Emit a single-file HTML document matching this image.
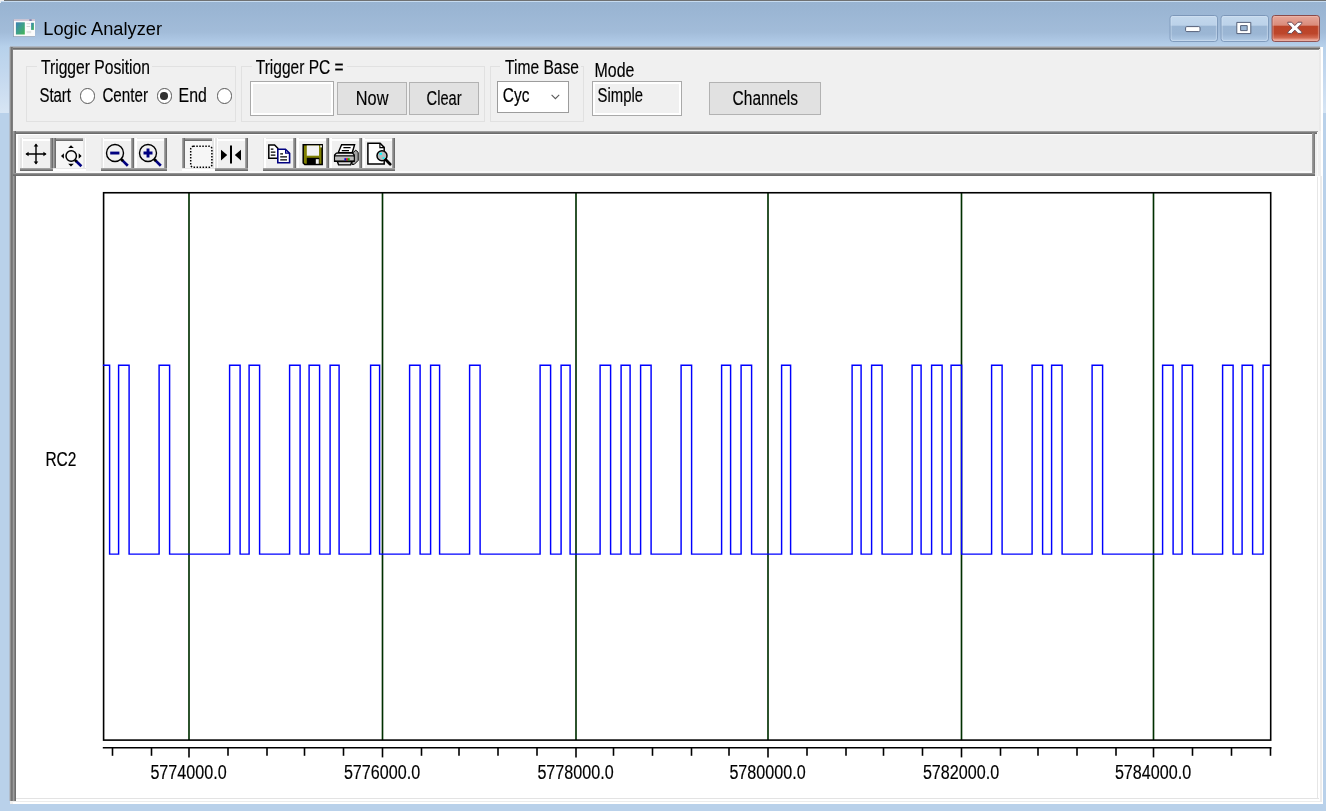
<!DOCTYPE html>
<html>
<head>
<meta charset="utf-8">
<title>Logic Analyzer</title>
<style>
html,body{margin:0;padding:0;}
body{width:1326px;height:811px;overflow:hidden;position:relative;
  font-family:"Liberation Sans",sans-serif;
  background:#b9d1ea;}
div{position:absolute;box-sizing:border-box;}
svg{position:absolute;left:0;top:0;will-change:transform;}
svg text{font-family:"Liberation Sans",sans-serif;}
/* window frame gradient (title + side borders) */
#framegrad{left:0;top:0;width:1326px;height:112.5px;
  background:linear-gradient(to bottom,#98b3d1 0px,#9bb6d4 12px,#a2bcd9 32px,#aac4e1 38px,#b7d1eb 47px,#c5d9ef 78px,#d7e5f4 112.5px);}
#topline0{left:0;top:0;width:1326px;height:1px;background:#6f7173;}
#topline1{left:0;top:1px;width:1326px;height:1.3px;background:#c6dbf0;}
/* client */
#client{left:10px;top:46.5px;width:1313px;height:757.5px;background:#f0f0f0;}
#cl-top{left:10px;top:46px;width:1310px;height:5px;background:linear-gradient(to bottom,#adb8c6 0,#adb8c6 20%,#9b9b9b 20%,#9b9b9b 40%,#6d6d6d 40%,#6d6d6d 60%,#8c8c8c 60%,#8c8c8c 80%,#f6f6f6 80%,#f6f6f6 100%);}
#cl-left{left:9px;top:47px;width:4px;height:754px;background:linear-gradient(to right,#b0bccb 0,#b0bccb 25%,#949494 25%,#949494 50%,#747474 50%,#747474 75%,#7e7e7e 75%,#7e7e7e 100%);}
#cl-right2{left:1319px;top:49px;width:2px;height:82px;background:linear-gradient(to right,#ececec 0,#e6e6e6 60%,#f4f4f4 100%);}
#cl-right{left:1310.5px;top:0.5px;width:2.5px;height:757px;background:#fff;}
/* plot area */
#plot{left:3px;top:129px;width:1310px;height:628.5px;background:#fff;}
#plot-left{left:0;top:0;width:3px;height:625px;background:linear-gradient(to right,#a0a0a0 0,#9a9a9a 45%,#6e6e6e 55%,#6e6e6e 100%);}
.hl{background:#e6e6e6;}
/* toolbar */
#tb{left:3px;top:84px;width:1302px;height:45px;background:#f0f0f0;
  border:3px solid #7c7c7c;border-image:none;}
#tb-t{left:0;top:0;width:1305px;height:3px;background:linear-gradient(to bottom,#a8a8a8 0,#8f8f8f 45%,#6c6c6c 55%,#6c6c6c 100%);}
#tb-l{left:0;top:0;width:3px;height:45px;background:linear-gradient(to right,#a0a0a0 0,#9a9a9a 45%,#6e6e6e 55%,#6e6e6e 100%);}
#tb-r{left:1299px;top:2px;width:3px;height:43px;background:linear-gradient(to right,#a0a0a0 0,#8c8c8c 50%,#727272 100%);}
#tb-b{left:0;top:42px;width:1302px;height:3px;background:linear-gradient(to bottom,#9c9c9c 0,#868686 45%,#6c6c6c 55%,#6c6c6c 100%);}
#tb-hi-t{left:3px;top:3px;width:1296px;height:1.5px;background:#fff;}
#tb-hi-l{left:3px;top:3px;width:1.5px;height:39px;background:#fff;}
#tb-hi-b{left:3px;top:40px;width:1296px;height:2px;background:#f9f9f9;}
/* toolbar buttons */
.tbb{top:7.4px;height:33px;width:33px;background:#f0f0f0;}
.tbb i{position:absolute;display:block;}
.tbb.up .a{left:0;top:0;right:0;height:3px;background:linear-gradient(to bottom,#e6e6e6 0,#e6e6e6 50%,#fff 50%,#fff 100%);}
.tbb.up .b{left:0;top:0;bottom:0;width:3px;background:linear-gradient(to right,#e6e6e6 0,#e6e6e6 50%,#fff 50%,#fff 100%);}
.tbb.up .c{right:0;top:0;bottom:0;width:3px;background:linear-gradient(to right,#a3a3a3 0,#a0a0a0 45%,#707070 55%,#6b6b6b 100%);}
.tbb.up .d{left:0;right:0;bottom:0;height:3px;background:linear-gradient(to bottom,#a3a3a3 0,#a0a0a0 45%,#707070 55%,#6b6b6b 100%);}
.tbb.dn{background:#f6f6f6;}
.tbb.dn .a{left:0;top:0;right:0;height:3px;background:linear-gradient(to bottom,#a3a3a3 0,#a0a0a0 45%,#707070 55%,#6b6b6b 100%);}
.tbb.dn .b{left:0;top:0;bottom:0;width:3px;background:linear-gradient(to right,#a3a3a3 0,#a0a0a0 45%,#707070 55%,#6b6b6b 100%);}
.tbb.dn .c{right:0;top:0;bottom:0;width:3px;background:linear-gradient(to right,#e6e6e6 0,#e6e6e6 50%,#fff 50%,#fff 100%);}
.tbb.dn .d{left:0;right:0;bottom:0;height:3px;background:linear-gradient(to bottom,#e6e6e6 0,#e6e6e6 50%,#fff 50%,#fff 100%);}
/* group boxes */
.gb{border:1px solid #e1e1e1;}
.gbl{background:#f0f0f0;height:4px;}
/* edit / buttons */
.edit{border:1px solid #a9a9a9;background:#f0f0f0;}
.edit:before{content:"";position:absolute;left:0;top:0;right:0;bottom:0;border:2px solid #fff;}
.btn{background:#e1e1e1;border:1px solid #b2b2b2;}
.combo{background:#fff;border:1px solid #9c9c9c;}
.radio{width:15.4px;height:15.4px;border-radius:50%;border:1.1px solid #595959;background:#fff;}
.radio.on:after{content:"";position:absolute;left:2.9px;top:2.9px;width:7.4px;height:7.4px;border-radius:50%;background:#333;}
/* caption buttons */
.cap{top:15.5px;width:48px;height:26px;border-radius:3.5px;border:1px solid #6683a6;
  background:linear-gradient(to bottom,#c1d6ec 0,#bcd2e9 38%,#9bb6d4 40%,#9ab4d3 70%,#b3cde8 100%);
  box-shadow:inset 0 0 0 1px rgba(214,229,245,.75);}
#close{border-color:#7b3a35;
  background:linear-gradient(to bottom,#e0a193 0,#d98a79 38%,#bc4429 40%,#bd462b 70%,#d4674f 92%,#e59c8c 100%);
  box-shadow:inset 0 0 0 1px rgba(240,180,165,.55);}
</style>
</head>
<body>
<div id="framegrad"></div>
<div id="topline0"></div>
<div id="topline1"></div>
<div style="left:0;top:0;width:4px;height:1px;background:#f2f2f2"></div>
<div style="left:0;top:1px;width:1px;height:2px;background:#e6ecf3"></div>

<!-- caption buttons -->

<div id="client">
  <div id="cl-right"></div>
  <!-- group boxes (coords relative to client: x-10, y-46.5) -->
  <div class="gb" style="left:16px;top:19.5px;width:210px;height:56px"></div>
  <div class="gbl" style="left:27px;top:18px;width:115px"></div>
  <div class="gb" style="left:231px;top:19.5px;width:243.5px;height:56px"></div>
  <div class="gbl" style="left:242px;top:18px;width:95px"></div>
  <div class="gb" style="left:480px;top:19.5px;width:93.7px;height:56px"></div>
  <div class="gbl" style="left:490.4px;top:18px;width:81px"></div>

  <div class="radio" style="left:70px;top:41.8px"></div>
  <div class="radio on" style="left:146.6px;top:41.8px"></div>
  <div class="radio" style="left:206.6px;top:41.8px"></div>

  <div class="edit" style="left:240px;top:34.4px;width:84px;height:35px"></div>
  <div class="btn" style="left:327.4px;top:35.5px;width:69.6px;height:33.2px"></div>
  <div class="btn" style="left:399.4px;top:35.5px;width:69.8px;height:33.2px"></div>
  <div class="combo" style="left:487.4px;top:34.4px;width:71.4px;height:32px"></div>
  <div class="edit" style="left:582px;top:34.4px;width:90.2px;height:35px"></div>
  <div class="btn" style="left:699.4px;top:35.5px;width:111.8px;height:33.2px"></div>

  <!-- toolbar -->
  <div id="tb" style="border:none">
    <div id="tb-hi-t"></div><div id="tb-hi-l"></div><div id="tb-hi-b"></div>
    <div id="tb-t"></div><div id="tb-l"></div><div id="tb-r"></div><div id="tb-b"></div>
    <div class="tbb up" style="left:7.25px"><i class="a"></i><i class="b"></i><i class="c"></i><i class="d"></i></div>
    <div class="tbb dn" style="left:40.25px"><i class="a"></i><i class="b"></i><i class="c"></i><i class="d"></i></div>
    <div class="tbb up" style="left:88.25px"><i class="a"></i><i class="b"></i><i class="c"></i><i class="d"></i></div>
    <div class="tbb up" style="left:121.25px"><i class="a"></i><i class="b"></i><i class="c"></i><i class="d"></i></div>
    <div class="tbb dn" style="left:169.25px"><i class="a"></i><i class="b"></i><i class="c"></i><i class="d"></i></div>
    <div class="tbb up" style="left:202.25px"><i class="a"></i><i class="b"></i><i class="c"></i><i class="d"></i></div>
    <div class="tbb up" style="left:250.25px"><i class="a"></i><i class="b"></i><i class="c"></i><i class="d"></i></div>
    <div class="tbb up" style="left:283.25px"><i class="a"></i><i class="b"></i><i class="c"></i><i class="d"></i></div>
    <div class="tbb up" style="left:316.25px"><i class="a"></i><i class="b"></i><i class="c"></i><i class="d"></i></div>
    <div class="tbb up" style="left:349.25px"><i class="a"></i><i class="b"></i><i class="c"></i><i class="d"></i></div>
  </div>

  <!-- plot -->
  <div id="plot">
    <div id="plot-left"></div>
    <!-- right light lines -->
    <div class="hl" style="left:1304.2px;top:0;width:1.3px;height:622.5px"></div>
    <div style="left:1307.4px;top:0;width:1.2px;height:625.5px;background:#ececec"></div>
    <!-- bottom light lines -->
    <div class="hl" style="left:3px;top:622.5px;width:1302.5px;height:1.3px;background:#e3e3e3"></div>
    <div style="left:0px;top:625.5px;width:1308.6px;height:1.3px;background:#ececec"></div>
  </div>
  <div style="left:1307.2px;top:85px;width:1.3px;height:45px;background:#f9f9f9"></div>
</div>
<div id="cl-top"></div>
<div id="cl-left"></div>
<div id="cl-right2"></div>

<svg width="1326" height="811" viewBox="0 0 1326 811">
  <!-- title icon -->
  <g>
    <rect x="13.2" y="19.6" width="21.8" height="17.3" fill="#8192a9"/>
    <rect x="13.8" y="19.5" width="21.2" height="16.8" fill="#fbfbfb"/>
    <rect x="29.4" y="19.5" width="2.2" height="1.2" fill="#6a76a8"/>
    <rect x="13.8" y="19.5" width="21.2" height="1.3" fill="#cbb6ca"/><rect x="29.4" y="19.5" width="2.2" height="1.3" fill="#6a76a8"/>
    <defs><linearGradient id="gi" x1="0" y1="0" x2="1" y2="1"><stop offset="0" stop-color="#3f7fb5"/><stop offset="0.5" stop-color="#3ea08a"/><stop offset="1" stop-color="#45b552"/></linearGradient></defs>
    <rect x="15.9" y="22.3" width="8.9" height="12.2" fill="url(#gi)"/>
    <rect x="31.1" y="22.8" width="2.8" height="7.1" fill="url(#gi)"/>
    <rect x="26.6" y="23.2" width="3.6" height="1" fill="#d4d4d4"/>
    <rect x="26.6" y="26" width="3.6" height="1" fill="#d4d4d4"/>
    <rect x="26.6" y="31" width="4.6" height="2.2" fill="#e4e4e4"/>
  </g>
  <!-- caption buttons -->
  <defs>
    <linearGradient id="capg" x1="0" y1="0" x2="0" y2="1">
      <stop offset="0" stop-color="#c3d8ed"/><stop offset="0.38" stop-color="#bcd2e9"/>
      <stop offset="0.4" stop-color="#9ab5d3"/><stop offset="0.72" stop-color="#9bb6d4"/>
      <stop offset="0.93" stop-color="#adc7e3"/><stop offset="1" stop-color="#c4daf0"/>
    </linearGradient>
    <linearGradient id="closeg" x1="0" y1="0" x2="0" y2="1">
      <stop offset="0" stop-color="#f0b9ad"/><stop offset="0.06" stop-color="#e5a396"/><stop offset="0.38" stop-color="#d98b7a"/>
      <stop offset="0.4" stop-color="#bb4328"/><stop offset="0.7" stop-color="#bd462b"/>
      <stop offset="0.86" stop-color="#d26a52"/><stop offset="0.95" stop-color="#eeaa9b"/><stop offset="1" stop-color="#f0b0a2"/>
    </linearGradient>
  </defs>
  <g>
    <rect x="1170.1" y="15.5" width="47.3" height="25.9" rx="2.6" fill="url(#capg)" stroke="#7c97b9" stroke-width="1"/>
    <rect x="1171.1" y="16.5" width="45.3" height="23.9" rx="1.8" fill="none" stroke="#d3e3f4" stroke-opacity="0.6" stroke-width="1"/>
    <rect x="1221.1" y="15.5" width="47.3" height="25.9" rx="2.6" fill="url(#capg)" stroke="#7c97b9" stroke-width="1"/>
    <rect x="1222.1" y="16.5" width="45.3" height="23.9" rx="1.8" fill="none" stroke="#d3e3f4" stroke-opacity="0.6" stroke-width="1"/>
    <rect x="1272.1" y="15.5" width="47.3" height="25.9" rx="2.6" fill="url(#closeg)" stroke="#8a4a4a" stroke-width="1"/>
    <rect x="1273.1" y="16.5" width="45.3" height="23.9" rx="1.8" fill="none" stroke="#f0b9ab" stroke-opacity="0.55" stroke-width="1"/>
  </g>
  <!-- caption glyphs -->
  <g>
    <rect x="1185.6" y="26.6" width="14.4" height="5" rx="1.2" fill="#fff" stroke="#55617a" stroke-width="1"/>
    <path d="M1236.8 22.4h14v11.2h-14z M1240.6 25.6v5h6.6v-5z" fill="#fff" fill-rule="evenodd" stroke="#55617a" stroke-width="1"/>
    <path d="M1287.8 22.2h3.8l3.2 3.3 3.2-3.3h3.8v1.4l-4.3 4.2 4.3 4.2v1.4h-3.8l-3.2-3.3-3.2 3.3h-3.8v-1.4l4.3-4.2-4.3-4.2z" fill="#fff" stroke="#6b4a55" stroke-width="1"/>
  </g>

  <!-- plot -->
  <g fill="none" stroke="#003000" stroke-width="1.65"><line x1="189.0" y1="192.75" x2="189.0" y2="740.1"/><line x1="382.5" y1="192.75" x2="382.5" y2="740.1"/><line x1="576.0" y1="192.75" x2="576.0" y2="740.1"/><line x1="768.0" y1="192.75" x2="768.0" y2="740.1"/><line x1="961.5" y1="192.75" x2="961.5" y2="740.1"/><line x1="1153.5" y1="192.75" x2="1153.5" y2="740.1"/></g>
  <rect x="103.6" y="192.75" width="1167.1" height="547.35" fill="none" stroke="#000" stroke-width="1.6"/>
  <path d="M102.89999999999999 365.2H109.6V554.1H118.6V365.2H129.1V554.1H159.1V365.2H169.6V554.1H229.6V365.2H240.1V554.1H249.1V365.2H259.6V554.1H289.6V365.2H300.1V554.1H309.1V365.2H319.6V554.1H330.1V365.2H339.1V554.1H370.6V365.2H379.6V554.1H409.6V365.2H420.1V554.1H430.6V365.2H439.6V554.1H469.6V365.2H480.1V554.1H540.1V365.2H550.6V554.1H561.1V365.2H570.1V554.1H600.1V365.2H610.6V554.1H621.1V365.2H630.1V554.1H640.6V365.2H651.1V554.1H681.1V365.2H691.6V554.1H721.6V365.2H730.6V554.1H741.1V365.2H751.6V554.1H781.6V365.2H790.6V554.1H852.1V365.2H861.1V554.1H871.6V365.2H882.1V554.1H912.1V365.2H921.1V554.1H931.6V365.2H942.1V554.1H951.1V365.2H961.6V554.1H991.6V365.2H1002.1V554.1H1032.1V365.2H1042.6V554.1H1051.6V365.2H1062.1V554.1H1092.1V365.2H1102.6V554.1H1162.6V365.2H1173.1V554.1H1182.1V365.2H1192.6V554.1H1222.6V365.2H1233.1V554.1H1242.1V365.2H1252.6V554.1H1263.1V365.2H1269.9" fill="none" stroke="#0000ff" stroke-width="1.45" stroke-linejoin="miter"/>
  <g stroke="#000" stroke-width="1.6" fill="none">
    <line x1="102.8" y1="747.7" x2="1271.5" y2="747.7"/>
    <line x1="112.5" y1="747.7" x2="112.5" y2="755.8000000000001"/><line x1="151.5" y1="747.7" x2="151.5" y2="755.8000000000001"/><line x1="189.0" y1="747.7" x2="189.0" y2="757.4000000000001"/><line x1="228.0" y1="747.7" x2="228.0" y2="755.8000000000001"/><line x1="267.0" y1="747.7" x2="267.0" y2="755.8000000000001"/><line x1="304.5" y1="747.7" x2="304.5" y2="755.8000000000001"/><line x1="343.5" y1="747.7" x2="343.5" y2="755.8000000000001"/><line x1="382.5" y1="747.7" x2="382.5" y2="757.4000000000001"/><line x1="421.5" y1="747.7" x2="421.5" y2="755.8000000000001"/><line x1="459.0" y1="747.7" x2="459.0" y2="755.8000000000001"/><line x1="498.0" y1="747.7" x2="498.0" y2="755.8000000000001"/><line x1="537.0" y1="747.7" x2="537.0" y2="755.8000000000001"/><line x1="576.0" y1="747.7" x2="576.0" y2="757.4000000000001"/><line x1="613.5" y1="747.7" x2="613.5" y2="755.8000000000001"/><line x1="652.5" y1="747.7" x2="652.5" y2="755.8000000000001"/><line x1="691.5" y1="747.7" x2="691.5" y2="755.8000000000001"/><line x1="729.0" y1="747.7" x2="729.0" y2="755.8000000000001"/><line x1="768.0" y1="747.7" x2="768.0" y2="757.4000000000001"/><line x1="807.0" y1="747.7" x2="807.0" y2="755.8000000000001"/><line x1="846.0" y1="747.7" x2="846.0" y2="755.8000000000001"/><line x1="883.5" y1="747.7" x2="883.5" y2="755.8000000000001"/><line x1="922.5" y1="747.7" x2="922.5" y2="755.8000000000001"/><line x1="961.5" y1="747.7" x2="961.5" y2="757.4000000000001"/><line x1="1000.5" y1="747.7" x2="1000.5" y2="755.8000000000001"/><line x1="1038.0" y1="747.7" x2="1038.0" y2="755.8000000000001"/><line x1="1077.0" y1="747.7" x2="1077.0" y2="755.8000000000001"/><line x1="1116.0" y1="747.7" x2="1116.0" y2="755.8000000000001"/><line x1="1153.5" y1="747.7" x2="1153.5" y2="757.4000000000001"/><line x1="1192.5" y1="747.7" x2="1192.5" y2="755.8000000000001"/><line x1="1231.5" y1="747.7" x2="1231.5" y2="755.8000000000001"/><line x1="1270.5" y1="747.7" x2="1270.5" y2="755.8000000000001"/>
  </g>

  <!-- toolbar icons -->
  <g id="ic1" fill="#000">
    <path d="M26.4 154H45.6M36 144.4V163.6" fill="none" stroke="#000" stroke-width="1.4"/>
    <path d="M36 143.4l2.3 3.2h-4.6zM36 164.6l2.3-3.2h-4.6zM25.4 154l3.2-2.3v4.6zM46.6 154l-3.2-2.3v4.6z"/>
  </g>
  <g id="ic2">
    <circle cx="71.2" cy="156" r="5.2" fill="none" stroke="#000" stroke-width="1.5"/>
    <path d="M76 161L81.4 166.2" stroke="#000080" stroke-width="2.6" fill="none"/>
    <path d="M75 160L76.6 161.6" stroke="#000" stroke-width="2.6" fill="none"/>
    <path d="M71 145.2l2.8 2.9h-5.6zM71 166.6l2.8-2.9h-5.6zM61 156l2.9-2.8v5.6zM81.6 156l-2.9-2.8v5.6z" fill="#000"/>
  </g>
  <g id="ic3">
    <circle cx="115" cy="153" r="8.5" fill="none" stroke="#000" stroke-width="1.4"/>
    <rect x="110.2" y="151.6" width="9.2" height="2.9" fill="#000080"/>
    <path d="M122.4 160.4L127.8 165.8" stroke="#000080" stroke-width="2.7" fill="none"/>
    <path d="M121 159L123 161" stroke="#000" stroke-width="2.7" fill="none"/>
  </g>
  <g id="ic4">
    <circle cx="148" cy="153" r="8.5" fill="none" stroke="#000" stroke-width="1.4"/>
    <path d="M143.5 151.6h9v2.9h-9zM146.55 148.5h2.9v9h-2.9z" fill="#000080"/>
    <path d="M155.4 160.4L160.8 165.8" stroke="#000080" stroke-width="2.7" fill="none"/>
    <path d="M154 159L156 161" stroke="#000" stroke-width="2.7" fill="none"/>
  </g>
  <g id="ic5">
    <rect x="190.7" y="146.3" width="21.2" height="21" rx="2.6" fill="none" stroke="#000" stroke-width="1.5" stroke-dasharray="1.5 1.5"/>
  </g>
  <g id="ic6" fill="#000">
    <rect x="230" y="145.5" width="2" height="18"/>
    <path d="M221 149.8L227.2 155L221 160.4zM241 149.8L234.8 155L241 160.4z"/>
  </g>
  <g id="ic7">
    <path d="M268.8 145h5.8l3.2 3.2v10h-9z" fill="#fff" stroke="#000" stroke-width="1.5"/>
    <path d="M270.8 149.2h2.6M270.8 152.2h4.6M270.8 155.2h4.6" stroke="#000" stroke-width="1.3"/>
    <path d="M277.8 149.2h7.6l4.2 4.2v9.4h-11.8z" fill="#fff" stroke="#000080" stroke-width="1.6"/>
    <path d="M285.6 149.6v3.6h3.6" fill="none" stroke="#000080" stroke-width="1.2"/>
    <path d="M280.2 153.8h2.8M280.2 156.8h6.8M280.2 159.8h6.8" stroke="#000" stroke-width="1.3"/>
  </g>
  <g id="ic8">
    <path d="M303.2 144.7h19v19.9h-17.4l-1.6-1.6z" fill="#808000" stroke="#000" stroke-width="1.5"/>
    <rect x="306.8" y="145.5" width="12.2" height="10.2" fill="#f2f2f2"/>
    <rect x="306.8" y="157.8" width="12.6" height="6.6" fill="#000"/>
    <rect x="315.8" y="159.2" width="3" height="4.6" fill="#f4f4f4"/>
    <rect x="320.2" y="145.4" width="1.8" height="2" fill="#e8e8e8"/>
  </g>
  <g id="ic9" stroke="#000" stroke-width="1.4" fill="none">
    <path d="M352.4 153.2l3.4-3 2.4 2.2v8l-4 4h-2.2z" fill="#a4a4a4" stroke-width="1"/>
    <path d="M341.6 144.7h13l-2.4 8h-14z" fill="#fff"/>
    <path d="M343.4 147.6h7.2M341.8 150.6h7.2" stroke-width="1.3"/>
    <path d="M336.4 153.1h16.2l1.6 1.8v6.4h-19.6v-6.2z" fill="#e9e9e9"/>
    <rect x="335.4" y="156.6" width="18" height="4" fill="#bdbdbd" stroke="none"/>
    <path d="M334.8 155.9h19.2M334.8 161.2h19.2" stroke-width="1.3"/>
    <path d="M337.4 161.6h14.4l-1.2 3.3h-12z" fill="#dcdcdc"/>
    <rect x="344.4" y="158.2" width="1.8" height="2.2" fill="#0000e0" stroke="none"/>
    <rect x="346.2" y="158.2" width="1.7" height="2.2" fill="#e00000" stroke="none"/>
    <rect x="347.9" y="158.2" width="1.8" height="2.2" fill="#00b000" stroke="none"/>
  </g>
  <g id="ic10">
    <path d="M367.9 143.3h12.2l4.1 4.1v16.7h-16.3z" fill="#fff" stroke="#000" stroke-width="1.5"/>
    <path d="M379.9 143.6v4.1h4.1" fill="none" stroke="#000" stroke-width="1.2"/>
    <circle cx="382" cy="155.8" r="5" fill="#b7bcbe" stroke="#000" stroke-width="1.5"/>
    <rect x="379.4" y="152.8" width="2.6" height="2" fill="#00ffff"/>
    <rect x="382.6" y="157.2" width="1.8" height="1.8" fill="#00ffff"/>
    <path d="M385.8 159.8L390.2 164.2" stroke="#000" stroke-width="2.8" stroke-linecap="round"/>
  </g>
  <!-- combo chevron -->
  <path d="M551.6 94.8L555.4 98.6L559.2 94.8" fill="none" stroke="#5a5a5a" stroke-width="1.1"/>

  <!-- text -->
  <g transform="translate(43.3 35.00) scale(1 1.0)"><text font-size="17.6" textLength="118.7" lengthAdjust="spacingAndGlyphs" fill="#000" stroke="#000" stroke-width="0">Logic Analyzer</text></g>
<g transform="translate(41 73.60) scale(1 1.22)"><text font-size="16" textLength="109.0" lengthAdjust="spacingAndGlyphs" fill="#000" stroke="#000" stroke-width="0.14">Trigger Position</text></g>
<g transform="translate(39.4 102.00) scale(1 1.22)"><text font-size="16" textLength="31.6" lengthAdjust="spacingAndGlyphs" fill="#000" stroke="#000" stroke-width="0.14">Start</text></g>
<g transform="translate(102.4 102.00) scale(1 1.22)"><text font-size="16" textLength="45.6" lengthAdjust="spacingAndGlyphs" fill="#000" stroke="#000" stroke-width="0.14">Center</text></g>
<g transform="translate(178.6 102.00) scale(1 1.22)"><text font-size="16" textLength="28.2" lengthAdjust="spacingAndGlyphs" fill="#000" stroke="#000" stroke-width="0.14">End</text></g>
<g transform="translate(255.8 73.60) scale(1 1.22)"><text font-size="16" textLength="87.8" lengthAdjust="spacingAndGlyphs" fill="#000" stroke="#000" stroke-width="0.14">Trigger PC =</text></g>
<g transform="translate(355.8 105.40) scale(1 1.22)"><text font-size="16" textLength="32.6" lengthAdjust="spacingAndGlyphs" fill="#000" stroke="#000" stroke-width="0.14">Now</text></g>
<g transform="translate(426.6 105.40) scale(1 1.22)"><text font-size="16" textLength="35.0" lengthAdjust="spacingAndGlyphs" fill="#000" stroke="#000" stroke-width="0.14">Clear</text></g>
<g transform="translate(505 73.60) scale(1 1.22)"><text font-size="16" textLength="74.0" lengthAdjust="spacingAndGlyphs" fill="#000" stroke="#000" stroke-width="0.14">Time Base</text></g>
<g transform="translate(502.8 102.00) scale(1 1.22)"><text font-size="16" textLength="26.6" lengthAdjust="spacingAndGlyphs" fill="#000" stroke="#000" stroke-width="0.14">Cyc</text></g>
<g transform="translate(594.6 76.60) scale(1 1.22)"><text font-size="16" textLength="39.8" lengthAdjust="spacingAndGlyphs" fill="#000" stroke="#000" stroke-width="0.14">Mode</text></g>
<g transform="translate(597.6 102.00) scale(1 1.22)"><text font-size="16" textLength="45.4" lengthAdjust="spacingAndGlyphs" fill="#000" stroke="#000" stroke-width="0.14">Simple</text></g>
<g transform="translate(732.6 105.40) scale(1 1.22)"><text font-size="16" textLength="65.4" lengthAdjust="spacingAndGlyphs" fill="#000" stroke="#000" stroke-width="0.14">Channels</text></g>
<g transform="translate(45.4 466.40) scale(1 1.22)"><text font-size="16" textLength="31.0" lengthAdjust="spacingAndGlyphs" fill="#000" stroke="#000" stroke-width="0.14">RC2</text></g>
<g transform="translate(150.4 779.10) scale(1 1.22)"><text font-size="16" textLength="76.2" lengthAdjust="spacingAndGlyphs" fill="#000" stroke="#000" stroke-width="0.14">5774000.0</text></g>
<g transform="translate(343.9 779.10) scale(1 1.22)"><text font-size="16" textLength="76.2" lengthAdjust="spacingAndGlyphs" fill="#000" stroke="#000" stroke-width="0.14">5776000.0</text></g>
<g transform="translate(537.4 779.10) scale(1 1.22)"><text font-size="16" textLength="76.2" lengthAdjust="spacingAndGlyphs" fill="#000" stroke="#000" stroke-width="0.14">5778000.0</text></g>
<g transform="translate(729.4 779.10) scale(1 1.22)"><text font-size="16" textLength="76.2" lengthAdjust="spacingAndGlyphs" fill="#000" stroke="#000" stroke-width="0.14">5780000.0</text></g>
<g transform="translate(922.9 779.10) scale(1 1.22)"><text font-size="16" textLength="76.2" lengthAdjust="spacingAndGlyphs" fill="#000" stroke="#000" stroke-width="0.14">5782000.0</text></g>
<g transform="translate(1114.9 779.10) scale(1 1.22)"><text font-size="16" textLength="76.2" lengthAdjust="spacingAndGlyphs" fill="#000" stroke="#000" stroke-width="0.14">5784000.0</text></g>
</svg>
</body>
</html>
